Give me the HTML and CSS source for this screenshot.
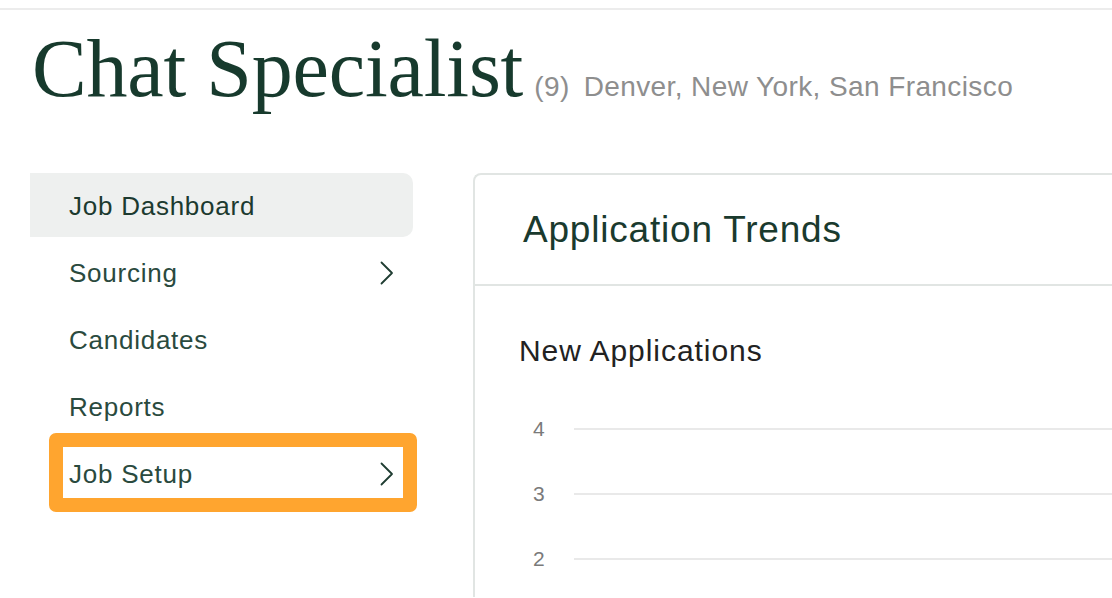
FILE: index.html
```html
<!DOCTYPE html>
<html lang="en">
<head>
<meta charset="utf-8">
<title>Chat Specialist</title>
<link rel="stylesheet" href="styles.css">
</head>
<body>
<div class="topline"></div>
<header class="title-row">
  <h1 class="title">Chat Specialist</h1>
  <span class="count">(9)</span>
  <span class="locations">Denver, New York, San Francisco</span>
</header>
<div class="layout">
  <nav class="sidebar">
    <a class="nav-item active">Job Dashboard</a>
    <a class="nav-item">Sourcing
      <svg class="chev" width="14" height="24" viewBox="0 0 14 24"><path d="M1.5 1.5 L12 12 L1.5 22.5" fill="none" stroke="#1f3d32" stroke-width="1.8" stroke-linecap="round" stroke-linejoin="round"/></svg>
    </a>
    <a class="nav-item">Candidates</a>
    <a class="nav-item">Reports</a>
    <a class="nav-item highlighted">Job Setup
      <svg class="chev" width="14" height="24" viewBox="0 0 14 24"><path d="M1.5 1.5 L12 12 L1.5 22.5" fill="none" stroke="#1f3d32" stroke-width="1.8" stroke-linecap="round" stroke-linejoin="round"/></svg>
      <span class="highlight-box"></span>
    </a>
  </nav>
  <section class="card">
    <div class="card-header">
      <h2 class="card-title">Application Trends</h2>
    </div>
    <div class="card-body">
      <h3 class="chart-title">New Applications</h3>
      <div class="chart">
        <div class="grid-row"><span class="tick">4</span><span class="gridline"></span></div>
        <div class="grid-row"><span class="tick">3</span><span class="gridline"></span></div>
        <div class="grid-row"><span class="tick">2</span><span class="gridline"></span></div>
      </div>
    </div>
  </section>
</div>
</body>
</html>
```
FILE: styles.css
```css
html, body {
  margin: 0;
  padding: 0;
  background: #ffffff;
  overflow: hidden;
}
body {
  width: 1112px;
  height: 598px;
  font-family: "Liberation Sans", Arial, sans-serif;
}
.topline {
  height: 8px;
  border-bottom: 2px solid #ececec;
}
.title-row {
  display: flex;
  align-items: baseline;
  padding-left: 32px;
  margin-top: 18px;
  white-space: nowrap;
}
.title {
  margin: 0;
  font-family: "Liberation Serif", "Times New Roman", serif;
  font-weight: 400;
  font-size: 82px;
  line-height: 82px;
  color: #173a2d;
  letter-spacing: -0.2px;
}
.count {
  margin-left: 11px;
  font-size: 28px;
  letter-spacing: 0.4px;
  color: #8e8e8e;
}
.locations {
  margin-left: 14px;
  font-size: 28px;
  letter-spacing: 0.4px;
  color: #8e8e8e;
}
.layout {
  display: flex;
  align-items: flex-start;
  padding-left: 30px;
  margin-top: 63px;
}
.sidebar {
  width: 383px;
  flex: none;
  display: flex;
  flex-direction: column;
  gap: 3px;
}
.nav-item {
  position: relative;
  height: 64px;
  display: flex;
  align-items: center;
  justify-content: space-between;
  padding: 2px 19px 0 39px;
  box-sizing: border-box;
  font-size: 26px;
  letter-spacing: 0.75px;
  color: #2a4a3e;
  text-decoration: none;
}
.nav-item.active {
  background: #eef0ef;
  border-radius: 0 10px 10px 0;
  color: #1c3a2f;
}
.chev {
  display: block;
}
.highlight-box {
  position: absolute;
  left: 19px;
  right: -4px;
  top: -8px;
  bottom: -7px;
  border: 14px solid #ffa52f;
  border-radius: 7px;
  pointer-events: none;
}
.card {
  flex: 1;
  margin-left: 60px;
  margin-right: -20px;
  border: 2px solid #e1e5e3;
  border-right: none;
  border-bottom: none;
  border-radius: 8px 0 0 0;
  height: 422px;
}
.card-header {
  height: 111px;
  border-bottom: 2px solid #e1e5e3;
  padding: 0 0 0 48px;
  box-sizing: border-box;
  display: flex;
  align-items: center;
}
.card-title {
  margin: 0;
  font-weight: 400;
  font-size: 37px;
  letter-spacing: 0.8px;
  color: #1a3a2e;
}
.card-body {
  padding: 48px 0 0 44px;
}
.chart-title {
  margin: 0;
  font-weight: 400;
  font-size: 30px;
  line-height: 34px;
  color: #222222;
  letter-spacing: 0.95px;
}
.chart {
  margin-top: 50px;
  display: flex;
  flex-direction: column;
  gap: 44px;
}
.grid-row {
  display: flex;
  align-items: center;
  height: 21px;
}
.tick {
  width: 55px;
  padding-left: 14px;
  box-sizing: border-box;
  font-size: 21px;
  color: #7a7a7a;
}
.gridline {
  flex: 1;
  height: 2px;
  background: #e9e9e9;
}
```
